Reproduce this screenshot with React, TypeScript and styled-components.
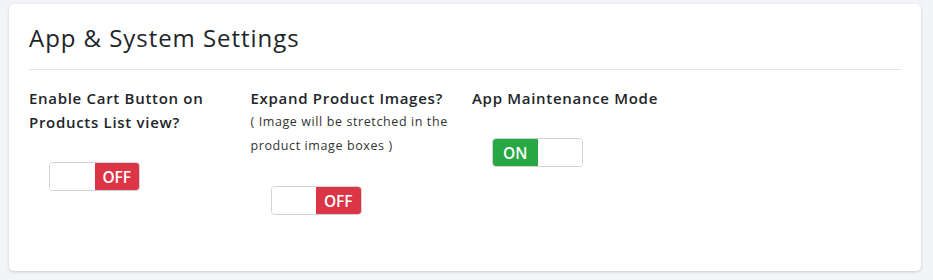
import React from "react";
import styled, { createGlobalStyle } from "styled-components";

const GlobalStyle = createGlobalStyle`
  html, body {
    margin: 0;
    padding: 0;
    background: #f3f4f8;
  }
  body {
    font-family: "Open Sans", "Liberation Sans", sans-serif;
    color: #212529;
  }
`;

interface Setting {
  label: React.ReactNode;
  hint?: React.ReactNode;
  on: boolean;
}

const settings: Setting[] = [
  {
    label: (
      <>
        Enable Cart Button on
        <br />
        Products List view?
      </>
    ),
    on: false,
  },
  {
    label: "Expand Product Images?",
    hint: (
      <>
        ( Image will be stretched in the
        <br />
        product image boxes )
      </>
    ),
    on: false,
  },
  {
    label: "App Maintenance Mode",
    on: true,
  },
];

const Toggle: React.FC<{ on: boolean }> = ({ on }) => (
  <StyledToggle>
    {on ? (
      <>
        <ToggleHalf $color="#28a745">ON</ToggleHalf>
        <ToggleHalf />
      </>
    ) : (
      <>
        <ToggleHalf />
        <ToggleHalf $color="#dc3545">OFF</ToggleHalf>
      </>
    )}
  </StyledToggle>
);

export default function App() {
  return (
    <>
      <GlobalStyle />
      <Page>
        <Card>
          <Title>App &amp; System Settings</Title>
          <Divider />
          <SettingsGrid>
            {settings.map((s, i) => (
              <SettingCol key={i}>
                <Label>{s.label}</Label>
                {s.hint && <Hint>{s.hint}</Hint>}
                <Toggle on={s.on} />
              </SettingCol>
            ))}
          </SettingsGrid>
        </Card>
      </Page>
    </>
  );
}

const Page = styled.div`
  padding: 4px 12px 9px 9px;
`;

const Card = styled.div`
  background: #fff;
  border-radius: 5px;
  box-shadow: 0 1px 3px rgba(0, 0, 0, 0.18);
  padding: 20px 20px 56px;
`;

const Title = styled.h2`
  margin: 0;
  font-size: 24px;
  font-weight: 400;
  line-height: 28px;
  letter-spacing: 0.95px;
`;

const Divider = styled.hr`
  border: 0;
  border-top: 1px solid #e3e4e7;
  margin: 17px 0 16px;
`;

const SettingsGrid = styled.div`
  display: grid;
  grid-template-columns: repeat(4, 221.5px);
`;

const SettingCol = styled.div`
  display: flex;
  flex-direction: column;
  align-items: flex-start;
`;

const Label = styled.div`
  font-size: 15px;
  font-weight: 600;
  line-height: 24px;
  letter-spacing: 0.7px;
`;

const Hint = styled.div`
  font-size: 12.5px;
  line-height: 24px;
  letter-spacing: 0.6px;
  color: #333;
`;

const StyledToggle = styled.div`
  display: flex;
  width: 91px;
  height: 29px;
  margin: 28px 0 0 20px;
  border: 1px solid #cfd3d9;
  border-radius: 4px;
  overflow: hidden;
  box-sizing: border-box;
`;

const ToggleHalf = styled.div<{ $color?: string }>`
  flex: 1;
  display: flex;
  align-items: center;
  justify-content: center;
  background: ${(p) => p.$color || "#fff"};
  color: #fff;
  font-size: 15.5px;
  font-weight: 600;
`;
